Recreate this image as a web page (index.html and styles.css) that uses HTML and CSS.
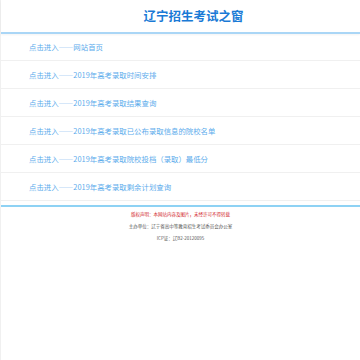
FILE: index.html
```html
<!DOCTYPE html>
<html lang="zh-CN">
<head>
<meta charset="utf-8">
<title>辽宁招生考试之窗</title>
<link rel="stylesheet" href="styles.css">
</head>
<body>
<div class="page">
  <header class="header">
    <h1 class="title">辽宁招生考试之窗</h1>
  </header>
  <ul class="links">
    <li class="link-row"><a class="link" href="#">点击进入——网站首页</a></li>
    <li class="link-row"><a class="link" href="#">点击进入——2019年高考录取时间安排</a></li>
    <li class="link-row"><a class="link" href="#">点击进入——2019年高考录取结果查询</a></li>
    <li class="link-row"><a class="link" href="#">点击进入——2019年高考录取已公布录取信息的院校名单</a></li>
    <li class="link-row"><a class="link" href="#">点击进入——2019年高考录取院校投档（录取）最低分</a></li>
    <li class="link-row"><a class="link" href="#">点击进入——2019年高考录取剩余计划查询</a></li>
  </ul>
  <footer class="footer">
    <p class="foot-line warn">版权声明：本网站内容及图片，未经许可不得转载</p>
    <p class="foot-line">主办单位：辽宁省高中等教育招生考试委员会办公室</p>
    <p class="foot-line">ICP证：辽B2-20120095</p>
  </footer>
</div>
</body>
</html>
```
FILE: styles.css
```css
html, body {
  margin: 0;
  padding: 0;
  background: #fff;
}
body {
  font-family: "Noto Sans CJK SC", "Noto Sans", sans-serif;
}
.page {
  border-left: 1px solid #f0f0f0;
  min-height: 360px;
  box-sizing: border-box;
}
.header {
  height: 32px;
  border-bottom: 2px solid #aad6f6;
  box-shadow: 0 1px 2px rgba(0,0,0,0.05);
  display: flex;
  align-items: center;
  justify-content: center;
  padding-left: 26px;
  box-sizing: content-box;
}
.title {
  margin: 0;
  font-size: 12.5px;
  font-weight: 700;
  color: #1a7ad6;
  line-height: 1;
}
.links {
  list-style: none;
  margin: 0;
  padding: 0;
}
.link-row {
  height: 27px;
  border-bottom: 1px solid #f0f0f0;
  display: flex;
  align-items: center;
  padding-left: 28px;
}
.link-row:first-child {
  height: 26px;
}
.link {
  font-size: 7.4px;
  color: #5cacec;
  text-decoration: none;
  line-height: 1;
}
.footer {
  margin-top: 4px;
  border-top: 2px solid #8ed2f4;
  padding-top: 5px;
  text-align: center;
}
.foot-line {
  margin: 0 0 7px;
  font-size: 4.5px;
  line-height: 5px;
  color: #555;
}
.foot-line.warn {
  color: #d2262a;
}
```
